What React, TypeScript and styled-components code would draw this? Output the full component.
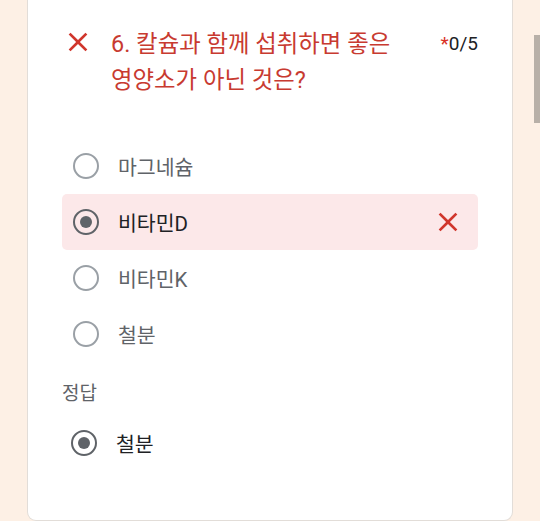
import styled, { createGlobalStyle } from "styled-components";

// Page-wide reset + peach background
const GlobalStyle = createGlobalStyle`
  html, body {
    margin: 0;
    padding: 0;
    background: #fdf0e5;
  }
  body {
    font-family: Roboto, "Noto Sans CJK KR", sans-serif;
    overflow: hidden;
    word-break: keep-all;
  }
`;

interface Option {
  label: string;
  selected?: boolean;
  wrong?: boolean;
}

const options: Option[] = [
  { label: "마그네슘" },
  { label: "비타민D", selected: true, wrong: true },
  { label: "비타민K" },
  { label: "철분" },
];

/**
 * Material "close" glyph, used for wrong answers
 */
const CloseIcon = ({ size = 32 }: { size?: number }) => (
  <svg width={size} height={size} viewBox="0 0 24 24" fill="#d0362c">
    <path d="M19 6.41 17.59 5 12 10.59 6.41 5 5 6.41 10.59 12 5 17.59 6.41 19 12 13.41 17.59 19 19 17.59 13.41 12z" />
  </svg>
);

/**
 * Graded quiz question card (Google Forms style)
 */
const App = () => {
  return (
    <>
      <GlobalStyle />
      <Page>
        <Card>
          {/* Question header */}
          <Header>
            <HeaderIcon>
              <CloseIcon />
            </HeaderIcon>
            <Title>6. 칼슘과 함께 섭취하면 좋은 영양소가 아닌 것은?</Title>
            <Score>
              <Star>*</Star>0/5
            </Score>
          </Header>

          {/* Choices */}
          <OptionList>
            {options.map((o) => (
              <OptionRow key={o.label} $wrong={o.wrong}>
                <Radio $checked={o.selected} />
                <OptionText $checked={o.selected}>{o.label}</OptionText>
                {o.wrong && (
                  <RowIcon>
                    <CloseIcon />
                  </RowIcon>
                )}
              </OptionRow>
            ))}
          </OptionList>

          {/* Correct answer */}
          <AnswerLabel>정답</AnswerLabel>
          <AnswerRow>
            <Radio $checked />
            <OptionText $checked>철분</OptionText>
          </AnswerRow>
        </Card>
        <ScrollThumb />
      </Page>
    </>
  );
};

const Page = styled.div`
  display: flex;
  height: 521px;
`;

const Card = styled.div`
  box-sizing: border-box;
  margin-left: 27px;
  width: 486px;
  height: 521px;
  background: #ffffff;
  border: 1px solid #e2ddd8;
  border-top: none;
  border-radius: 0 0 9px 9px;
  padding: 0 34px;
  display: flex;
  flex-direction: column;
`;

const Header = styled.div`
  display: flex;
  align-items: flex-start;
  padding-top: 26px;
`;

const HeaderIcon = styled.div`
  width: 32px;
  height: 32px;
  flex-shrink: 0;
`;

const Title = styled.div`
  flex: 1;
  margin-left: 17px;
  margin-right: 24px;
  font-size: 23.4px;
  line-height: 36px;
  color: #c83a30;
`;

const Score = styled.div`
  font-size: 19px;
  line-height: 36px;
  color: #202124;
  white-space: nowrap;
`;

const Star = styled.span`
  color: #d93025;
`;

const OptionList = styled.div`
  display: flex;
  flex-direction: column;
  margin-top: 40px;
`;

const OptionRow = styled.div<{ $wrong?: boolean }>`
  display: flex;
  align-items: center;
  height: 56px;
  padding-left: 11px;
  padding-right: 14px;
  border-radius: 5px;
  background: ${({ $wrong }) => ($wrong ? "#fce8e9" : "transparent")};
`;

const Radio = styled.div<{ $checked?: boolean }>`
  box-sizing: border-box;
  width: 26px;
  height: 26px;
  flex-shrink: 0;
  border-radius: 50%;
  border: 2.5px solid ${({ $checked }) => ($checked ? "#5f6368" : "#9aa0a6")};
  display: flex;
  align-items: center;
  justify-content: center;

  &::after {
    content: "";
    display: ${({ $checked }) => ($checked ? "block" : "none")};
    width: 12px;
    height: 12px;
    border-radius: 50%;
    background: #5f6368;
  }
`;

const OptionText = styled.span<{ $checked?: boolean }>`
  flex: 1;
  margin-left: 19px;
  font-size: 20.5px;
  color: ${({ $checked }) => ($checked ? "#202124" : "#5f6368")};
`;

const RowIcon = styled.div`
  width: 32px;
  height: 32px;
`;

const AnswerLabel = styled.div`
  margin-top: 20px;
  font-size: 19px;
  line-height: 24px;
  color: #5f6368;
`;

const AnswerRow = styled.div`
  display: flex;
  align-items: center;
  height: 56px;
  margin-top: 9px;
  padding-left: 9px;
`;

const ScrollThumb = styled.div`
  position: absolute;
  top: 35px;
  right: 0;
  width: 6px;
  height: 88px;
  background: #b8b0a8;
`;

export default App;
